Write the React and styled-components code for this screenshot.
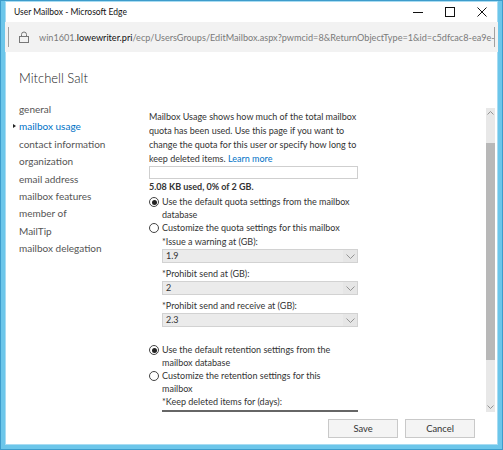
import React from 'react'
import styled, { createGlobalStyle } from 'styled-components'

const Global = createGlobalStyle`
  html, body { margin: 0; padding: 0; }
  body {
    width: 503px;
    height: 450px;
    overflow: hidden;
    font-family: Lato, "Open Sans", sans-serif;
    color: #333;
  }
`

const Frame = styled.div`
  box-sizing: border-box;
  width: 503px;
  height: 450px;
  display: flex;
  flex-direction: column;
  background: #fff;
  border: 5px solid #6cc6ea;
  border-top: 1px solid #6cc6ea;
  box-shadow: inset 0 0 0 1px #a8dcf2;
  outline: 1px solid #3d9ccb;
  outline-offset: -1px;
`

const TitleBar = styled.div`
  height: 21px;
  display: flex;
  align-items: center;
  padding-left: 9px;
  font-size: 8.5px;
  color: #111;
`

const TitleText = styled.div`
  flex: 1;
`

const WinButton = styled.div`
  width: 32px;
  height: 21px;
  display: flex;
  align-items: center;
  justify-content: center;
`

const AddressBar = styled.div`
  height: 30px;
  background: #f2f2f2;
  display: flex;
  align-items: center;
  padding: 0 3px;
`

const Sep = styled.div`
  width: 1px;
  height: 20px;
  background: #a0a0a0;
`

const LockBox = styled.div`
  width: 30px;
  display: flex;
  justify-content: center;
`

const Url = styled.div`
  flex: 1;
  font-size: 9.15px;
  color: #7a7a7a;
  white-space: nowrap;
  overflow: hidden;
  strong { font-weight: normal; color: #111; }
`

const Body = styled.div`
  flex: 1;
  display: flex;
  flex-direction: column;
  min-height: 0;
`

const Main = styled.div`
  flex: 1;
  display: flex;
  min-height: 0;
`

const Sidebar = styled.div`
  width: 130px;
  padding: 18px 0 0 14px;
`

const Name = styled.div`
  font-size: 13px;
  font-weight: 300;
  color: #222;
  margin-bottom: 15px;
`

const NavItem = styled.div`
  position: relative;
  font-size: 10px;
  line-height: 17.4px;
  color: ${p => (p.$active ? '#0072c6' : '#555')};
  &::before {
    content: '';
    display: ${p => (p.$active ? 'block' : 'none')};
    position: absolute;
    left: -6px;
    top: 6px;
    border-left: 3px solid #222;
    border-top: 2.5px solid transparent;
    border-bottom: 2.5px solid transparent;
  }
`

const Scroller = styled.div`
  flex: 1;
  display: flex;
  padding-top: 56px;
  min-height: 0;
`

const Content = styled.div`
  width: 209px;
  overflow: hidden;
  font-size: 9px;
  line-height: 14px;
  color: #333;
`

const Para = styled.p`
  margin: 2px 0 0;
  a { color: #0072c6; text-decoration: none; }
`

const Usage = styled.div`
  height: 11px;
  border: 1px solid #cfcfcf;
  margin-top: 0;
`

const UsedText = styled.div`
  font-weight: 700;
  margin-top: 1px;
`

const RadioRow = styled.div`
  display: flex;
  gap: 3px;
  margin-top: ${p => p.$mt || 0}px;
  max-width: ${p => p.$narrow ? '182px' : 'none'};
  line-height: 13px;
`

const RadioDot = styled.span`
  flex: none;
  box-sizing: border-box;
  width: 10px;
  height: 10px;
  margin-top: 2px;
  border: 1px solid #444;
  border-radius: 50%;
  display: flex;
  align-items: center;
  justify-content: center;
  &::after {
    content: '';
    display: ${p => (p.$on ? 'block' : 'none')};
    width: 5px;
    height: 5px;
    border-radius: 50%;
    background: #222;
  }
`

const Field = styled.div`
  margin: ${p => p.$mt ?? 5}px 0 0 13px;
`

const FieldLabel = styled.div`
  line-height: 12px;
`

const Select = styled.div`
  margin-top: 1px;
  box-sizing: border-box;
  height: 14px;
  border: 1px solid #d2d2d2;
  background: #ebebeb;
  display: flex;
  align-items: center;
  padding-left: 3px;
  span { flex: 1; }
`

const Chevron = styled.div`
  width: 14px;
  height: 12px;
  display: flex;
  align-items: center;
  justify-content: center;
  background: #e6e6e6;
`

const TextInput = styled.div`
  margin-top: 2px;
  height: 14px;
  border-top: 2px solid #666;
`

const Gap = styled.div`
  height: ${p => p.$h}px;
`

const ScrollBar = styled.div`
  margin-left: auto;
  margin-right: 3px;
  width: 9px;
  background: #e8e8e8;
  display: flex;
  flex-direction: column;
  align-items: center;
`

const Arrow = styled.div`
  height: 10px;
  display: flex;
  align-items: center;
`

const Thumb = styled.div`
  width: 9px;
  height: 217px;
  background: #b8b8b8;
  margin-top: 25px;
  margin-bottom: auto;
`

const Footer = styled.div`
  height: 33px;
  display: flex;
  justify-content: flex-end;
  align-items: center;
  gap: 7px;
  padding-right: 23px;
`

const Button = styled.button`
  box-sizing: border-box;
  width: 70px;
  height: 19px;
  border: 1px solid #c9c9c9;
  background: #f4f4f4;
  font-family: inherit;
  font-size: 9.4px;
  color: #333;
  padding: 0;
`

const Chev = ({ up }) => (
  <svg width="7" height="4" viewBox="0 0 7 4">
    <path d={up ? 'M0.5 3.5L3.5 0.5L6.5 3.5' : 'M0.5 0.5L3.5 3.5L6.5 0.5'} fill="none" stroke="#8a8a8a" strokeWidth="0.9" />
  </svg>
)

const Radio = ({ on, children, mt, narrow }) => (
  <RadioRow $mt={mt} $narrow={narrow}>
    <RadioDot $on={on} />
    <span>{children}</span>
  </RadioRow>
)

const Dropdown = ({ label, value, mt }) => (
  <Field $mt={mt}>
    <FieldLabel>{label}</FieldLabel>
    <Select>
      <span>{value}</span>
      <Chevron>
        <svg width="9" height="5" viewBox="0 0 9 5">
          <path d="M0.5 0.5L4.5 4.5L8.5 0.5" fill="none" stroke="#8a8a8a" strokeWidth="0.9" />
        </svg>
      </Chevron>
    </Select>
  </Field>
)

const navItems = [
  'general',
  'mailbox usage',
  'contact information',
  'organization',
  'email address',
  'mailbox features',
  'member of',
  'MailTip',
  'mailbox delegation',
]

export default function App() {
  return (
    <>
      <Global />
      <Frame>
        <TitleBar>
          <TitleText>User Mailbox - Microsoft Edge</TitleText>
          <WinButton>
            <svg width="10" height="10" viewBox="0 0 10 10"><path d="M0 5.5H10" stroke="#111" strokeWidth="1" /></svg>
          </WinButton>
          <WinButton>
            <svg width="10" height="10" viewBox="0 0 10 10"><rect x="0.5" y="0.5" width="9" height="9" fill="none" stroke="#111" strokeWidth="1" /></svg>
          </WinButton>
          <WinButton>
            <svg width="10" height="10" viewBox="0 0 10 10"><path d="M0.5 0.5L9.5 9.5M9.5 0.5L0.5 9.5" stroke="#111" strokeWidth="1" /></svg>
          </WinButton>
        </TitleBar>
        <AddressBar>
          <Sep />
          <LockBox>
            <svg width="10" height="12" viewBox="0 0 10 12">
              <path d="M2.5 5.5V3.5a2.5 2.5 0 0 1 5 0v2" fill="none" stroke="#777" strokeWidth="1" />
              <rect x="0.5" y="5.5" width="9" height="6" fill="none" stroke="#777" strokeWidth="1" />
            </svg>
          </LockBox>
          <Url>
            win1601.<strong>lowewriter.pri</strong>/ecp/UsersGroups/EditMailbox.aspx?pwmcid=8&amp;ReturnObjectType=1&amp;id=c5dfcac8-ea9e-
          </Url>
          <Sep />
        </AddressBar>
        <Body>
          <Main>
            <Sidebar>
              <Name>Mitchell Salt</Name>
              {navItems.map(n => (
                <NavItem key={n} $active={n === 'mailbox usage'}>{n}</NavItem>
              ))}
            </Sidebar>
            <Scroller>
              <Content>
                <Para>
                  Mailbox Usage shows how much of the total mailbox quota has been used. Use this page if you want to
                  change the quota for this user or specify how long to keep deleted items. <a href="#">Learn more</a>
                </Para>
                <Usage />
                <UsedText>5.08 KB used, 0% of 2 GB.</UsedText>
                <Radio on mt={1}>Use the default quota settings from the mailbox database</Radio>
                <Radio>Customize the quota settings for this mailbox</Radio>
                <Dropdown mt={2} label="*Issue a warning at (GB):" value="1.9" />
                <Dropdown label="*Prohibit send at (GB):" value="2" />
                <Dropdown label="*Prohibit send and receive at (GB):" value="2.3" />
                <Gap $h={16} />
                <Radio on narrow>Use the default retention settings from the mailbox database</Radio>
                <Radio narrow>Customize the retention settings for this mailbox</Radio>
                <Field $mt={1}>
                  <FieldLabel>*Keep deleted items for (days):</FieldLabel>
                  <TextInput />
                </Field>
              </Content>
              <ScrollBar>
                <Arrow><Chev up /></Arrow>
                <Thumb />
                <Arrow><Chev /></Arrow>
              </ScrollBar>
            </Scroller>
          </Main>
          <Footer>
            <Button>Save</Button>
            <Button>Cancel</Button>
          </Footer>
        </Body>
      </Frame>
    </>
  )
}
